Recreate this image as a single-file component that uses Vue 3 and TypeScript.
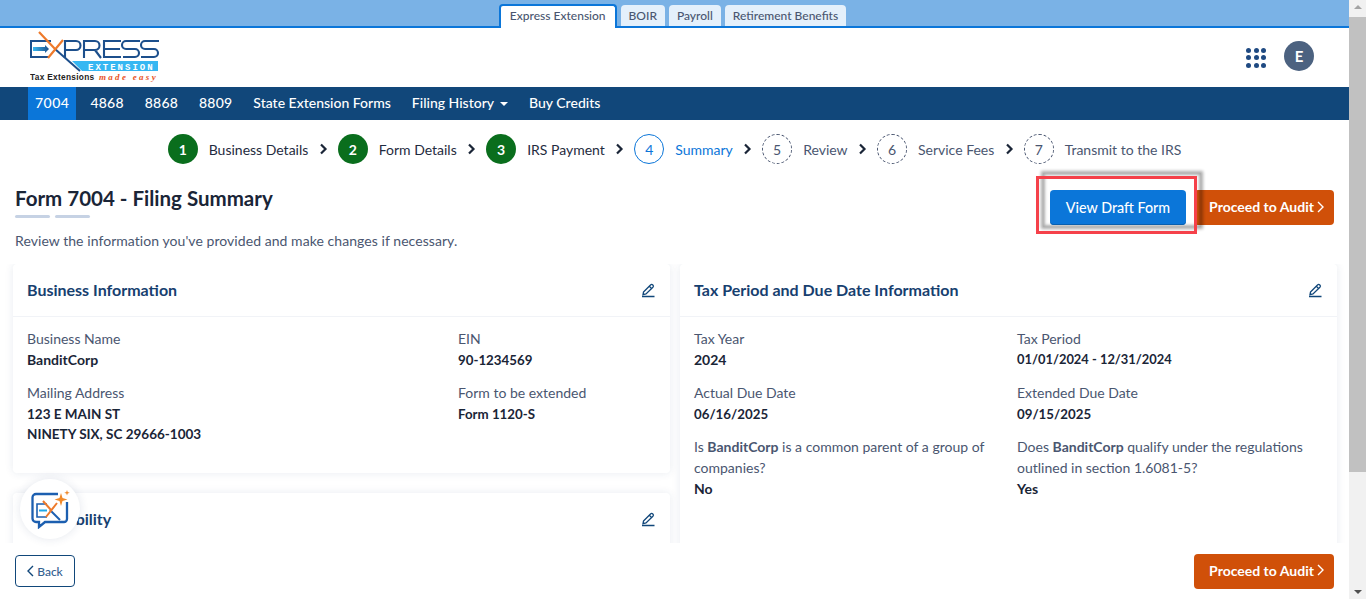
<script setup lang="ts">
interface Step { n: number; label: string; state: 'done' | 'active' | 'todo' }
const tabs = ['Express Extension', 'BOIR', 'Payroll', 'Retirement Benefits']
const navItems = ['7004', '4868', '8868', '8809', 'State Extension Forms']
const steps: Step[] = [
  { n: 1, label: 'Business Details', state: 'done' },
  { n: 2, label: 'Form Details', state: 'done' },
  { n: 3, label: 'IRS Payment', state: 'done' },
  { n: 4, label: 'Summary', state: 'active' },
  { n: 5, label: 'Review', state: 'todo' },
  { n: 6, label: 'Service Fees', state: 'todo' },
  { n: 7, label: 'Transmit to the IRS', state: 'todo' },
]
const dots = Array.from({ length: 9 }, (_, i) => i)
</script>

<template>
  <div class="page">
    <div class="main">
      <div class="tabbar">
        <div v-for="(t, i) in tabs" :key="t" class="tab" :class="{ on: i === 0 }">{{ t }}</div>
      </div>
      <header class="head">
        <svg class="logo" viewBox="0 0 130 59" width="130" height="59">
          <defs>
            <linearGradient id="arrowGrad" x1="0" x2="1" y1="0" y2="0">
              <stop offset="0" stop-color="#37b8f0" />
              <stop offset="1" stop-color="#1c4f8c" />
            </linearGradient>
          </defs>
          <path d="M21 13H1v16h18" fill="none" stroke="#1c4f8c" stroke-width="2" />
          <path d="M3 19h12v-2l4 4-4 4v-2H3z" fill="url(#arrowGrad)" />
          <path d="M25 21l25 22" stroke="#1c4f8c" stroke-width="2" fill="none" />
          <path d="M9 4l17 18M33 12L18 30" stroke="#ee7a2b" stroke-width="2.200" fill="none" />
          <path d="M35 30V13h11a4.500 4.500 0 0 1 0 9H35M54 30V13h11a4.500 4.500 0 0 1 0 9H54M65 22l6 8M91 13H74v16h17M74 21h16M110 13H96a4 4 0 0 0 0 8h9a4 4 0 0 1 0 8H93M129 13h-14a4 4 0 0 0 0 8h9a4 4 0 0 1 0 8h-13" fill="none" stroke="#1c4f8c" stroke-width="2.100" />
          <path d="M42 33h86v10H52z" fill="#36b7f2" />
          <text x="58" y="42" class="logo-ext">EXTENSION</text>
          <text x="0" y="52" class="logo-tax">Tax Extensions</text>
          <text x="69" y="52" class="logo-easy">made easy</text>
        </svg>
        <div class="head-right">
          <div class="apps"><i v-for="d in dots" :key="d"></i></div>
          <div class="avatar">E</div>
        </div>
      </header>
      <nav class="nav">
        <a v-for="(n, i) in navItems" :key="n" class="nav-item" :class="{ on: i === 0 }">{{ n }}</a>
        <a class="nav-item">Filing History<span class="caret"></span></a>
        <a class="nav-item">Buy Credits</a>
      </nav>

      <div class="stepper">
        <template v-for="(s, i) in steps" :key="s.n">
          <div class="step" :class="s.state">
            <span class="num">{{ s.n }}</span>
            <span class="lbl">{{ s.label }}</span>
          </div>
          <svg v-if="i < steps.length - 1" class="sep" width="11" height="12" viewBox="0 0 11 12">
            <path d="M3 1.500 7.500 6 3 10.500" fill="none" stroke="#1a2537" stroke-width="2.200" />
          </svg>
        </template>
      </div>

      <div class="title-row">
        <div>
          <h1>Form 7004 - Filing Summary</h1>
          <div class="rule"><i></i><i></i></div>
        </div>
        <div class="actions">
          <div class="draft-wrap">
            <button class="btn blue">View Draft Form</button>
          </div>
          <button class="btn orange">Proceed to Audit<svg width="7" height="12" viewBox="0 0 7 12"><path d="M1 1l5 5-5 5" fill="none" stroke="#fff" stroke-width="1.400" /></svg></button>
        </div>
      </div>
      <p class="desc">Review the information you've provided and make changes if necessary.</p>

      <div class="content">
        <div class="col">
          <section class="card">
            <div class="card-head">
              <h2>Business Information</h2>
              <svg class="pen" width="16" height="16" viewBox="0 0 16 16"><path d="M3.500 10 10.500 3a1.600 1.600 0 0 1 2.400 2.300L6 12l-3 .7zM9.300 4.200l2.400 2.400M2 14.500h12.500" fill="none" stroke="#11477a" stroke-width="1.300" /></svg>
            </div>
            <div class="card-body biz">
              <div class="pair"><label>Business Name</label><b>BanditCorp</b></div>
              <div class="pair"><label>EIN</label><b class="tight">90-1234569</b></div>
              <div class="pair"><label>Mailing Address</label><b class="caps">123 E MAIN ST<br />NINETY SIX, SC 29666-1003</b></div>
              <div class="pair"><label>Form to be extended</label><b class="tight">Form 1120-S</b></div>
            </div>
          </section>
          <section class="card second">
            <div class="card-head">
              <h2>Tax Liability</h2>
              <svg class="pen" width="16" height="16" viewBox="0 0 16 16"><path d="M3.500 10 10.500 3a1.600 1.600 0 0 1 2.400 2.300L6 12l-3 .7zM9.300 4.200l2.400 2.400M2 14.500h12.500" fill="none" stroke="#11477a" stroke-width="1.300" /></svg>
            </div>
          </section>
        </div>
        <div class="col">
          <section class="card tall">
            <div class="card-head">
              <h2>Tax Period and Due Date Information</h2>
              <svg class="pen" width="16" height="16" viewBox="0 0 16 16"><path d="M3.500 10 10.500 3a1.600 1.600 0 0 1 2.400 2.300L6 12l-3 .7zM9.300 4.200l2.400 2.400M2 14.500h12.500" fill="none" stroke="#11477a" stroke-width="1.300" /></svg>
            </div>
            <div class="card-body tax">
              <div class="pair"><label>Tax Year</label><b>2024</b></div>
              <div class="pair"><label>Tax Period</label><b class="dates">01/01/2024 - 12/31/2024</b></div>
              <div class="pair"><label>Actual Due Date</label><b class="tight">06/16/2025</b></div>
              <div class="pair"><label>Extended Due Date</label><b class="tight">09/15/2025</b></div>
              <div class="pair"><label>Is <em>BanditCorp</em> is a common parent of a group of companies?</label><b>No</b></div>
              <div class="pair"><label>Does <em>BanditCorp</em> qualify under the regulations outlined in section 1.6081-5?</label><b>Yes</b></div>
            </div>
          </section>
        </div>
      </div>

      <footer class="foot">
        <button class="btn back"><svg width="7" height="12" viewBox="0 0 7 12"><path d="M6 1 1 6l5 5" fill="none" stroke="#11477a" stroke-width="1.400" /></svg>Back</button>
        <button class="btn orange">Proceed to Audit<svg width="7" height="12" viewBox="0 0 7 12"><path d="M1 1l5 5-5 5" fill="none" stroke="#fff" stroke-width="1.400" /></svg></button>
      </footer>

      <div class="chat">
        <svg width="40" height="40" viewBox="0 0 40 40">
          <path d="M28 5H6a3.500 3.500 0 0 0-3.500 3.500v21A3.500 3.500 0 0 0 6 33h3v5l6-5h19a3 3 0 0 0 3-3V13" fill="none" stroke="#1c5fb0" stroke-width="2.300" />
          <path d="M17 15H7v13h10" fill="none" stroke="#1c5fb0" stroke-width="1.600" />
          <path d="M9 21.500h8" stroke="#20a8e8" stroke-width="2" />
          <path d="M20 21l10 10" stroke="#1c5fb0" stroke-width="2" />
          <path d="M13 12l8 9M27 14l-11 14" fill="none" stroke="#ee7a2b" stroke-width="2" />
          <path d="M31 4l1.500 5 5 1.500-5 1.500-1.500 5-1.500-5-5-1.500 5-1.500z" fill="#f08a2c" />
          <path d="M37 1l.7 2 2 .7-2 .7-.7 2-.7-2-2-.7 2-.7z" fill="#f08a2c" />
        </svg>
      </div>
    </div>

    <div class="scrollbar">
      <span class="arrow up"></span>
      <div class="thumb"></div>
      <span class="arrow down"></span>
    </div>
  </div>
</template>

<style>
html, body { margin: 0; padding: 0; overflow: hidden; }
</style>

<style scoped>
.page { display: flex; width: 1366px; height: 599px; overflow: hidden; background: #fff; font-family: Lato, "Open Sans", sans-serif; color: #1a2537; }
.main { position: relative; display: flex; flex-direction: column; width: 1349px; height: 599px; overflow: hidden; }

.tabbar { display: flex; justify-content: center; align-items: flex-end; gap: 4px; height: 26px; flex: none; padding-right: 4px; background: #7ab2e6; border-bottom: 2px solid #0b76d9; }
.tab { height: 21px; padding: 0 8px; line-height: 21px; font-size: 12px; font-weight: 500; color: #4a5670; background: #e4f0fb; border-radius: 4px 4px 0 0; }
.tab.on { height: 24px; margin-bottom: -2px; padding: 0 9px; line-height: 20px; color: #4a5670; background: #fff; border: 2px solid #0b76d9; border-bottom: 0; box-sizing: border-box; }

.head { display: flex; justify-content: space-between; align-items: center; height: 59px; flex: none; padding: 0 35px 0 30px; }
.logo { display: block; }
.logo-ext { font: 700 9px "Liberation Mono", monospace; fill: #fff; letter-spacing: 2px; }
.logo-tax { font: 700 8.300px "Liberation Sans", sans-serif; fill: #222; letter-spacing: .3px; }
.logo-easy { font: italic 700 9px "Liberation Serif", serif; fill: #e8541f; letter-spacing: 2.300px; }
.head-right { display: flex; align-items: center; gap: 18px; }
.apps { display: grid; grid-template-columns: repeat(3, 5px); gap: 2.500px; }
.apps i { width: 5px; height: 5px; border-radius: 50%; background: #1f4a82; }
.avatar { width: 30px; height: 30px; margin-bottom: 4px; border-radius: 50%; background: #4c6280; color: #fff; font-size: 15px; font-weight: 700; text-align: center; line-height: 30px; }

.nav { display: flex; gap: 7px; height: 33px; flex: none; padding-left: 28px; background: #11477a; }
.nav-item { padding: 0 7px 1px; line-height: 32px; color: #fff; font-size: 14px; font-weight: 500; }
.nav-item:nth-child(-n+4) { letter-spacing: .2px; }
.nav-item.on { letter-spacing: .5px; background: #0b76d9; }
.caret { display: inline-block; margin-left: 6px; vertical-align: 2px; border: 4px solid transparent; border-top-color: #fff; border-bottom: 0; }

.stepper { display: flex; justify-content: center; align-items: center; gap: 9.200px; height: 58px; flex: none; font-size: 14px; }
.step { display: flex; align-items: center; gap: 11px; }
.num { display: flex; justify-content: center; align-items: center; width: 30px; height: 30px; box-sizing: border-box; border-radius: 50%; font-size: 14px; }
.done .num { background: #0a6e1d; color: #fff; font-weight: 700; }
.done .lbl { color: #1f2b40; }
.active .num { border: 1px solid #0b76d9; color: #0b76d9; }
.active .lbl { color: #0b76d9; }
.todo .num { border: 1px dashed #4a5670; color: #4a5670; }
.todo .lbl { color: #4a5670; }

.title-row { display: flex; justify-content: space-between; align-items: flex-start; height: 54px; flex: none; padding: 0 15px; }
h1 { margin: 5px 0 0; font-size: 20.500px; line-height: 30px; font-weight: 700; color: #1a2537; }
.rule { display: flex; gap: 5px; margin-top: 2px; }
.rule i { width: 35px; height: 3px; border-radius: 2px; background: #c6d2e4; }
.actions { display: flex; margin-top: 12px; }
.draft-wrap { position: relative; margin-right: 8px; }
.draft-wrap::before { content: ""; position: absolute; left: -7px; top: -17px; width: 158px; height: 54px; box-shadow: 0 0 3px 2px rgba(0, 0, 0, .32), inset 0 0 3px 2px rgba(0, 0, 0, .32); }
.draft-wrap::after { content: ""; position: absolute; left: -14px; top: -14px; box-sizing: border-box; width: 161px; height: 58px; border: 3px solid #f5414a; pointer-events: none; }
.btn { display: inline-flex; justify-content: center; align-items: center; gap: 3px; box-sizing: border-box; height: 35px; padding: 0 0 2px; border: 0; border-radius: 4px; font-family: inherit; font-size: 14px; font-weight: 500; color: #fff; }
.blue { position: relative; width: 136px; padding-bottom: 0; background: #0b76d9; box-shadow: inset 0 -1px 0 #0a5fae; font-size: 14.300px; }
.orange { width: 140px; padding-left: 5px; background: #d05009; font-weight: 700; }
.desc { margin: 0; height: 32px; flex: none; padding: 0 15px; line-height: 18px; font-size: 14px; letter-spacing: .06px; color: #4a5670; }

.content { display: grid; grid-template-columns: 657px 657px; gap: 10px; flex: 1; min-height: 0; padding: 0 13px; overflow: hidden; }
.col { display: flex; flex-direction: column; gap: 20px; min-width: 0; }
.card { flex: none; background: #fff; border-radius: 4px; box-shadow: 0 0 8px rgba(30, 60, 110, .1); }
.second { height: 80px; }
.tall { height: 320px; }
.card-head { display: flex; justify-content: space-between; align-items: center; box-sizing: content-box; height: 50px; padding: 0 14px 2px; border-bottom: 1px solid #f1f3f7; }
.pen { margin-top: 2px; }
h2 { margin: 0; font-size: 16px; font-weight: 700; color: #17406f; }
.card-body { display: grid; padding: 11px 14px 22px; row-gap: 12px; }
.biz { grid-template-columns: 431px 1fr; padding-bottom: 28px; }
.tax { grid-template-columns: 323px 1fr; }
.pair { display: flex; flex-direction: column; }
.pair label { max-width: 300px; font-size: 14px; line-height: 21px; color: #4a5670; }
.pair label em { font-style: normal; font-weight: 700; }
.pair b { font-size: 14px; line-height: 21px; font-weight: 700; color: #1a2537; }
.pair b.tight { padding-top: 1px; margin-bottom: -1px; font-size: 13.300px; }
.pair b.caps { padding: 1px 0; line-height: 20px; font-size: 13.500px; }
.pair b.dates { font-size: 12.900px; }

.foot { display: flex; justify-content: space-between; align-items: center; height: 56px; flex: none; padding: 0 15px; background: #fff; }
.back { width: 60px; height: 32px; padding: 0; background: #fff; border: 1px solid #11477a; color: #34608f; font-size: 12px; }

.chat { position: absolute; left: 20px; top: 479px; display: flex; justify-content: center; align-items: center; width: 60px; height: 60px; border-radius: 50%; background: #fff; box-shadow: 0 0 10px rgba(30, 60, 110, .12); }

.scrollbar { display: flex; flex-direction: column; align-items: center; width: 17px; height: 599px; flex: none; background: #f1f1f1; }
.arrow { width: 0; height: 0; flex: none; border: 4px solid transparent; }
.up { margin: 5px 0 8px; border-bottom: 4px solid #a3a3a3; border-top: 0; }
.down { margin: auto 0 5px; border-top: 4px solid #505050; border-bottom: 0; }
.thumb { width: 100%; height: 455px; background: #c1c1c1; }
</style>
